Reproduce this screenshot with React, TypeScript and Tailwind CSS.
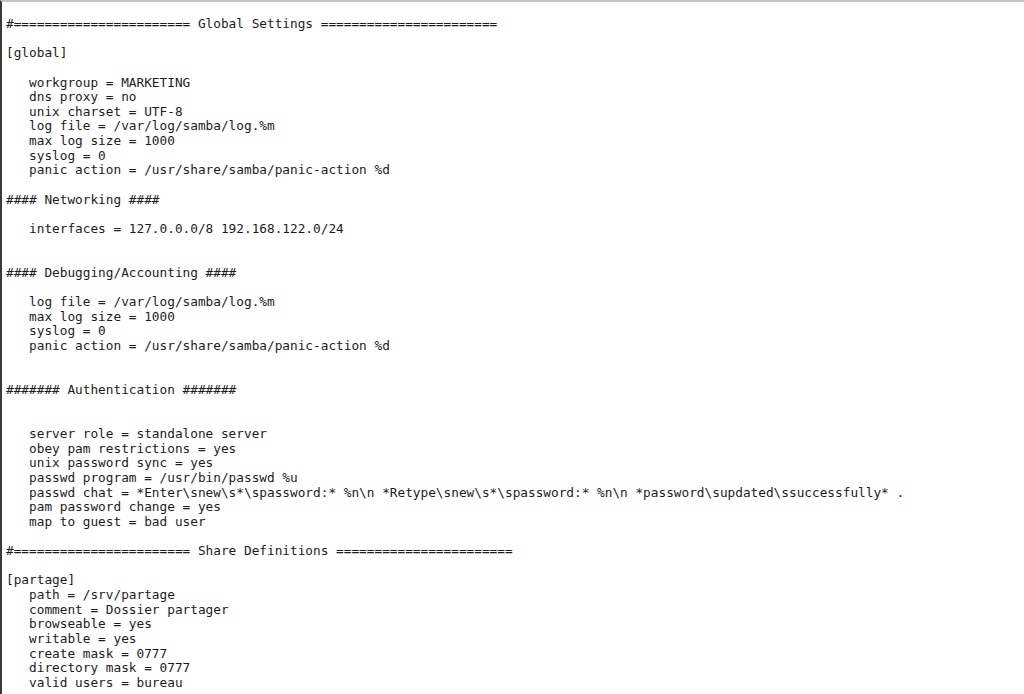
const lines = [
  "#======================= Global Settings =======================",
  "",
  "[global]",
  "",
  "   workgroup = MARKETING",
  "   dns proxy = no",
  "   unix charset = UTF-8",
  "   log file = /var/log/samba/log.%m",
  "   max log size = 1000",
  "   syslog = 0",
  "   panic action = /usr/share/samba/panic-action %d",
  "",
  "#### Networking ####",
  "",
  "   interfaces = 127.0.0.0/8 192.168.122.0/24",
  "",
  "",
  "#### Debugging/Accounting ####",
  "",
  "   log file = /var/log/samba/log.%m",
  "   max log size = 1000",
  "   syslog = 0",
  "   panic action = /usr/share/samba/panic-action %d",
  "",
  "",
  "####### Authentication #######",
  "",
  "",
  "   server role = standalone server",
  "   obey pam restrictions = yes",
  "   unix password sync = yes",
  "   passwd program = /usr/bin/passwd %u",
  "   passwd chat = *Enter\\snew\\s*\\spassword:* %n\\n *Retype\\snew\\s*\\spassword:* %n\\n *password\\supdated\\ssuccessfully* .",
  "   pam password change = yes",
  "   map to guest = bad user",
  "",
  "#======================= Share Definitions =======================",
  "",
  "[partage]",
  "   path = /srv/partage",
  "   comment = Dossier partager",
  "   browseable = yes",
  "   writable = yes",
  "   create mask = 0777",
  "   directory mask = 0777",
  "   valid users = bureau",
];

export default function App() {
  return (
    <div className="w-[1024px] h-[694px] overflow-hidden bg-white">
      <div className="h-full border-t-2 border-t-[#c4c4c4] border-l-2 border-l-[#3a3a3a] pl-[4px] pt-[15px]">
        <pre
          className="m-0 whitespace-pre text-[12.76px] leading-[14.64px] text-[#1c1c1c]"
          style={{ fontFamily: '"DejaVu Sans Mono", monospace' }}
        >
          {lines.join("\n")}
        </pre>
      </div>
    </div>
  );
}
